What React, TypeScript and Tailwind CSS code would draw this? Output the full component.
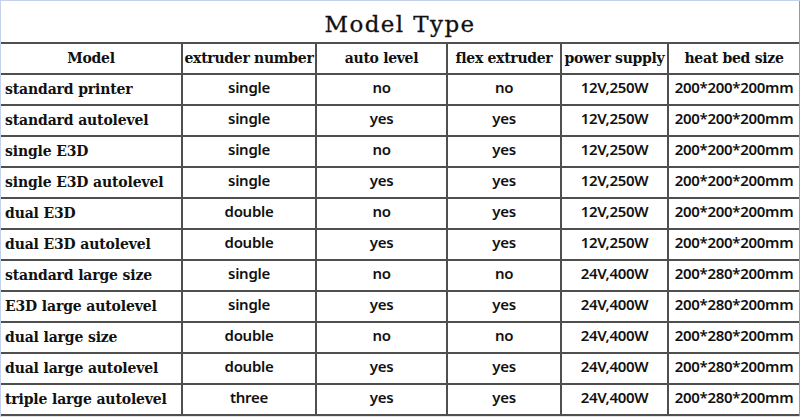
import React from "react";

type Row = [string, string, string, string, string, string];

const headers: Row = ["Model", "extruder number", "auto level", "flex extruder", "power supply", "heat bed size"];

const rows: Row[] = [
  ["standard printer", "single", "no", "no", "12V,250W", "200*200*200mm"],
  ["standard autolevel", "single", "yes", "yes", "12V,250W", "200*200*200mm"],
  ["single E3D", "single", "no", "yes", "12V,250W", "200*200*200mm"],
  ["single E3D autolevel", "single", "yes", "yes", "12V,250W", "200*200*200mm"],
  ["dual E3D", "double", "no", "yes", "12V,250W", "200*200*200mm"],
  ["dual E3D autolevel", "double", "yes", "yes", "12V,250W", "200*200*200mm"],
  ["standard large size", "single", "no", "no", "24V,400W", "200*280*200mm"],
  ["E3D large autolevel", "single", "yes", "yes", "24V,400W", "200*280*200mm"],
  ["dual large size", "double", "no", "no", "24V,400W", "200*280*200mm"],
  ["dual large autolevel", "double", "yes", "yes", "24V,400W", "200*280*200mm"],
  ["triple large autolevel", "three", "yes", "yes", "24V,400W", "200*280*200mm"],
];

const serif = { fontFamily: '"DejaVu Serif", "Liberation Serif", serif' };
const sans = { fontFamily: '"Noto Sans", "Open Sans", sans-serif' };

export default function App() {
  return (
    <div className="w-[800px] h-[417px] bg-white border-l border-t border-[#c3d2ea] flex flex-col overflow-hidden text-[#111]">
      <div className="flex flex-col border-r border-[#9a9a9a]">
        <div
          className="h-[41px] flex items-center justify-center pt-[6px] text-[23px] tracking-[1.4px] [-webkit-text-stroke:0.3px_#111]"
          style={serif}
        >
          Model Type
        </div>
        <div className="grid grid-cols-[180px_132px_129px_112px_105px_130px] gap-[2px] bg-[#4f4f4f] border-y-2 border-[#4f4f4f]">
          {headers.map((h, i) => (
            <div
              key={i}
              className="h-[29px] bg-white flex items-center justify-center font-bold text-[14px] whitespace-nowrap tracking-[-0.3px]"
              style={serif}
            >
              {h}
            </div>
          ))}
          {rows.map((r, ri) =>
            r.map((c, ci) =>
              ci === 0 ? (
                <div
                  key={`${ri}-${ci}`}
                  className="h-[29px] bg-white flex items-center pl-[4px] font-bold text-[14px] whitespace-nowrap tracking-[-0.15px]"
                  style={serif}
                >
                  {c}
                </div>
              ) : (
                <div
                  key={`${ri}-${ci}`}
                  className="h-[29px] bg-white flex items-center justify-center pb-[4px] font-semibold text-[15px] whitespace-nowrap tracking-[-0.3px]"
                  style={sans}
                >
                  {c}
                </div>
              )
            )
          )}
        </div>
      </div>
      <div className="flex-1 bg-[#e4e4e4]" />
    </div>
  );
}
